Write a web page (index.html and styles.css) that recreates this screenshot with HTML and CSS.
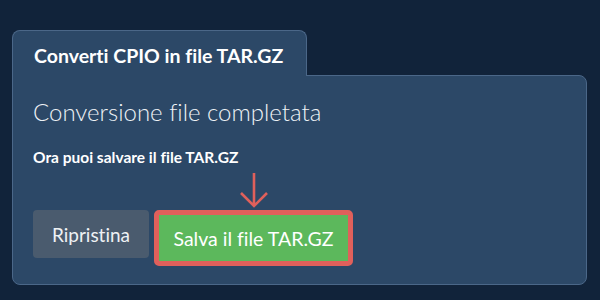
FILE: index.html
```html
<!DOCTYPE html>
<html lang="it">
<head>
<meta charset="utf-8">
<link rel="stylesheet" href="styles.css">
</head>
<body>
<div class="widget">
  <div class="tab">Converti CPIO in file TAR.GZ</div>
  <div class="panel">
    <h2 class="heading">Conversione file completata</h2>
    <p class="note">Ora puoi salvare il file TAR.GZ</p>
    <div class="actions">
      <button class="btn btn-reset">Ripristina</button>
      <div class="save-wrap">
        <svg class="arrow" width="30" height="36" viewBox="0 0 30 36">
          <path d="M15 1 V34 M2 21 L15 34 L28 21" fill="none" stroke="#e0605b" stroke-width="2.6"/>
        </svg>
        <button class="btn btn-save">Salva il file TAR.GZ</button>
      </div>
    </div>
  </div>
</div>
</body>
</html>
```

FILE: styles.css
```css
html, body {
  margin: 0;
  padding: 0;
  background: #11233a;
}
body {
  font-family: Lato, "Open Sans", sans-serif;
  font-variant-ligatures: none;
  color: #fff;
  padding: 30px 13px 0 12px;
  width: 600px;
  height: 300px;
  box-sizing: border-box;
}
.widget {
  display: flex;
  flex-direction: column;
  align-items: flex-start;
}
.tab {
  width: 295px;
  height: 46px;
  box-sizing: border-box;
  background: #2c4867;
  border: 1px solid #4b6788;
  border-bottom: none;
  border-radius: 8px 8px 0 0;
  font-weight: 700;
  font-size: 19.5px;
  padding: 13px 0 0 21px;
  margin-bottom: -1px;
  position: relative;
  z-index: 1;
}
.panel {
  width: 575px;
  height: 210px;
  box-sizing: border-box;
  background: #2c4867;
  border: 1px solid #4b6788;
  border-radius: 0 8px 8px 8px;
  padding: 21px 0 0 20px;
}
.heading {
  margin: 0;
  font-weight: 300;
  font-size: 24px;
  line-height: 30px;
  color: #eef2f6;
}
.note {
  margin: 20px 0 0;
  font-weight: 700;
  font-size: 15.5px;
  line-height: 20px;
}
.actions {
  display: flex;
  align-items: flex-start;
  gap: 5px;
  margin-top: 43px;
}
.btn {
  font-family: Lato, "Open Sans", sans-serif;
  font-variant-ligatures: none;
  color: #fff;
  border: none;
  cursor: pointer;
}
.btn-reset {
  width: 116px;
  height: 48px;
  background: #4a5b6e;
  border-radius: 4px;
  font-size: 19px;
  color: #eef1f4;
  padding: 0;
}
.save-wrap {
  position: relative;
}
.arrow {
  position: absolute;
  left: 50%;
  top: -38px;
  margin-left: -15px;
}
.btn-save {
  height: 56px;
  width: 199px;
  box-sizing: border-box;
  background: #5cb85c;
  border: 5px solid #e0605b;
  border-radius: 5px;
  font-size: 19.5px;
  padding: 0;
}
```
